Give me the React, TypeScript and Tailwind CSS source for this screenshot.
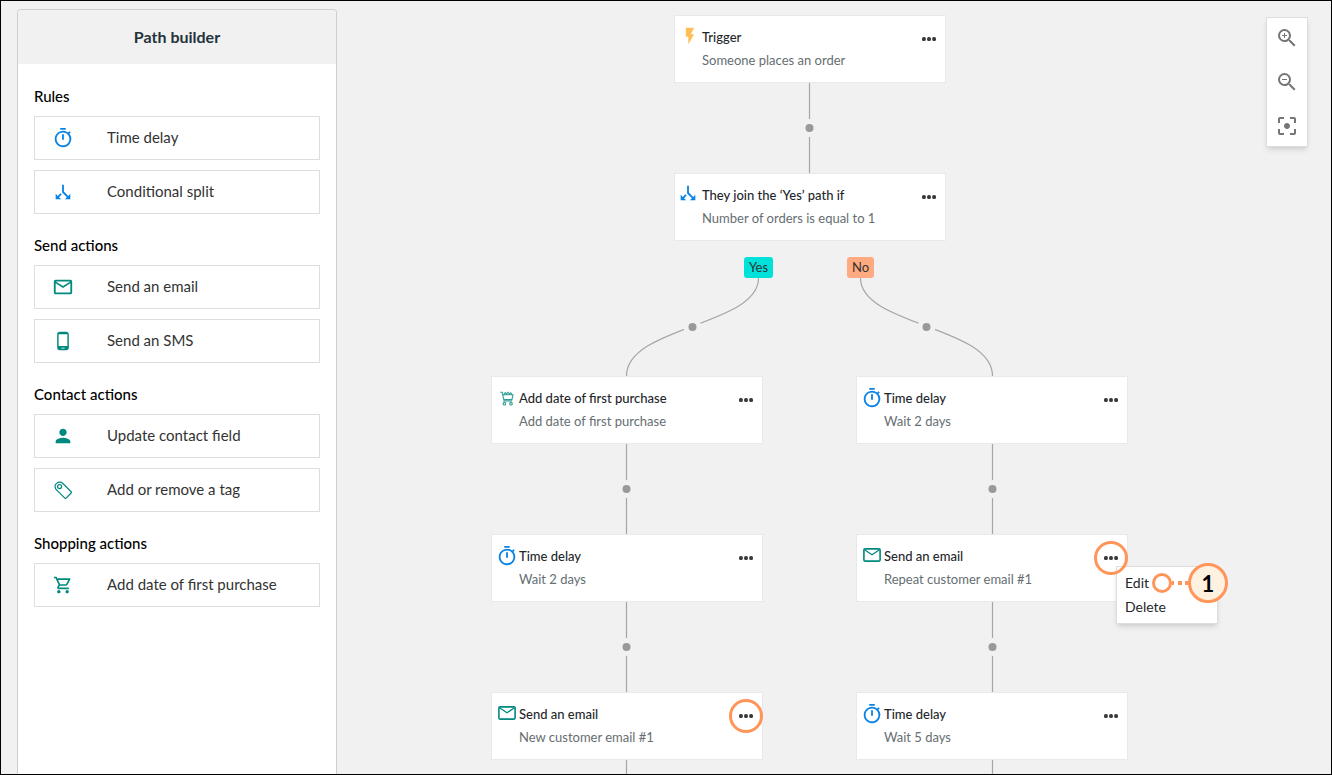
import type { ReactNode } from 'react';
import { clsx } from 'clsx';
import {
    MdCallSplit,
    MdFilterCenterFocus,
    MdFlashOn,
    MdOutlineEmail,
    MdOutlineShoppingCart,
    MdOutlineTimer,
    MdPerson,
    MdPhoneAndroid,
    MdZoomIn,
    MdZoomOut,
} from 'react-icons/md';

function TagIcon() {
    return (
        <svg viewBox="0 0 24 24" className="size-[22px] text-[#00897f]" fill="none" stroke="currentColor" strokeWidth="1.3">
            <path d="M4.2 11.2C2.9 8.6 3.2 6.2 5 4.8c1.9-1.5 4.7-1.6 6.6-.2l9.3 9.3a1 1 0 0 1 0 1.4l-5.5 5.5a1 1 0 0 1-1.4 0z" />
            <circle cx="8.3" cy="8.3" r="2.2" />
        </svg>
    );
}

function CartFullIcon() {
    return (
        <svg viewBox="0 0 14 15" className="h-[15px] w-[14px] text-[#2f9e95]" fill="none" stroke="currentColor" strokeWidth="1.1">
            <path d="M.3 1.3h1.9L4.1 10h8M3 3.8h10L11.9 8.6H3.8M3.8 3.5L5.2 1.6l1.3 1.3L8 1.3l1.5 1.5 1.2-1L12 3.5" />
            <circle cx="4.4" cy="12.7" r="1.3" />
            <circle cx="11" cy="12.7" r="1.3" />
        </svg>
    );
}

function MailIcon() {
    return (
        <svg viewBox="0 0 18 14" className="mb-0.5 h-[14px] w-[18px] text-[#00897f]" fill="none" stroke="currentColor">
            <rect x=".9" y=".9" width="16.2" height="12.2" rx="1" strokeWidth="1.6" />
            <path d="M1.5 1.8L9 6.8l7.5-5" strokeWidth="1.3" />
        </svg>
    );
}

const timer = <MdOutlineTimer className="size-[22px] text-[#0a84e4]" />;
const split = <MdCallSplit className="size-[22px] rotate-180 text-[#0a84e4]" />;

const GROUPS: { title: string; items: { label: string; icon: ReactNode }[] }[] = [
    {
        title: 'Rules',
        items: [
            { label: 'Time delay', icon: timer },
            { label: 'Conditional split', icon: split },
        ],
    },
    {
        title: 'Send actions',
        items: [
            { label: 'Send an email', icon: <MdOutlineEmail className="size-[22px] text-[#00897f]" /> },
            { label: 'Send an SMS', icon: <MdPhoneAndroid className="size-[22px] p-px text-[#00897f]" /> },
        ],
    },
    {
        title: 'Contact actions',
        items: [
            { label: 'Update contact field', icon: <MdPerson className="size-[22px] text-[#00897f]" /> },
            { label: 'Add or remove a tag', icon: <TagIcon /> },
        ],
    },
    {
        title: 'Shopping actions',
        items: [
            { label: 'Add date of first purchase', icon: <MdOutlineShoppingCart className="size-[22px] p-px text-[#00897f]" /> },
        ],
    },
];

type Step = { id: string; place: string; title: string; detail: string; icon: ReactNode };

// Positions are relative to the canvas
const STEPS: Step[] = [
    {
        id: 'trigger',
        place: 'left-[337px] top-[14px]',
        title: 'Trigger',
        detail: 'Someone places an order',
        icon: <MdFlashOn className="mb-0.5 size-5 text-[#ffbe55]" />,
    },
    {
        id: 'split',
        place: 'left-[337px] top-[172px]',
        title: 'They join the ‘Yes’ path if',
        detail: 'Number of orders is equal to 1',
        icon: <MdCallSplit className="mb-1 mr-1 size-[22px] shrink-0 rotate-180 text-[#0a84e4]" />,
    },
    {
        id: 'yes-1',
        place: 'left-[154px] top-[375px]',
        title: 'Add date of first purchase',
        detail: 'Add date of first purchase',
        icon: <CartFullIcon />,
    },
    { id: 'yes-2', place: 'left-[154px] top-[533px]', title: 'Time delay', detail: 'Wait 2 days', icon: timer },
    { id: 'yes-3', place: 'left-[154px] top-[691px]', title: 'Send an email', detail: 'New customer email #1', icon: <MailIcon /> },
    { id: 'no-1', place: 'left-[519px] top-[375px]', title: 'Time delay', detail: 'Wait 2 days', icon: timer },
    { id: 'no-2', place: 'left-[519px] top-[533px]', title: 'Send an email', detail: 'Repeat customer email #1', icon: <MailIcon /> },
    { id: 'no-3', place: 'left-[519px] top-[691px]', title: 'Time delay', detail: 'Wait 5 days', icon: timer },
];

const LINKS = [
    'M472.5 82V172',
    'M421.5 277C421.5 325 289.5 325 289.5 375',
    'M523.5 277C523.5 325 655.5 325 655.5 375',
    'M289.5 443V533',
    'M289.5 601V691',
    'M289.5 759V849',
    'M655.5 443V533',
    'M655.5 601V691',
    'M655.5 759V849',
];

const JOINTS = [
    [472.5, 127],
    [355.5, 326],
    [589.5, 326],
    [289.5, 488],
    [289.5, 646],
    [655.5, 488],
    [655.5, 646],
];

function Connectors() {
    return (
        <svg className="absolute left-0 top-0 h-full w-full" aria-hidden="true">
            {LINKS.map((d) => (
                <path key={d} d={d} fill="none" stroke="#a6a6a6" strokeWidth="1.2" />
            ))}
            {JOINTS.map(([x, y]) => (
                <g key={`${x}-${y}`}>
                    <circle cx={x} cy={y} r="9" fill="#f1f1f1" />
                    <circle cx={x} cy={y} r="4" fill="#999999" />
                </g>
            ))}
        </svg>
    );
}

function StepCard({ step }: { step: Step }) {
    return (
        <article className={clsx('absolute flex h-[68px] w-[272px] gap-px border border-[#e7e9eb] bg-white pl-1 pt-[10px]', step.place)}>
            <span className="flex h-[22px] w-[22px] shrink-0 items-center justify-center">{step.icon}</span>
            <div className="whitespace-nowrap text-[13px] leading-[23px]">
                <h3 className="font-medium text-[#1f272b]">{step.title}</h3>
                <p className="text-[#666e72]">{step.detail}</p>
            </div>
            <button type="button" aria-label={`Options for ${step.title}`} className="ml-auto mr-[9px] flex h-[26px] items-center">
                <svg viewBox="0 0 14 4" className="h-1 w-[14px]" fill="#3a3a3a">
                    <rect width="3.8" height="4" rx="1.5" />
                    <rect x="5.1" width="3.8" height="4" rx="1.5" />
                    <rect x="10.2" width="3.8" height="4" rx="1.5" />
                </svg>
            </button>
        </article>
    );
}

function Sidebar() {
    return (
        <aside className="ml-4 mt-2 w-80 shrink-0 rounded-t border border-b-0 border-[#cfcfcf] bg-white">
            <h1 className="flex h-[54px] items-center justify-center rounded-t bg-[#f1f1f1] text-[16px] font-bold text-[#24333b]">
                Path builder
            </h1>
            <div className="flex flex-col gap-[21px] px-4 pt-[22px]">
                {GROUPS.map((group) => (
                    <section key={group.title}>
                        <h2 className="mb-[10px] text-[15px] font-medium leading-5 text-black">{group.title}</h2>
                        <div className="flex flex-col gap-[10px]">
                            {group.items.map((item) => (
                                <button
                                    key={item.label}
                                    type="button"
                                    className="flex h-11 w-full items-center gap-[33px] border border-[#dcdedf] bg-white pl-[17px] text-left text-[15px] text-[#333333]"
                                >
                                    {item.icon}
                                    <span className="pb-0.5">{item.label}</span>
                                </button>
                            ))}
                        </div>
                    </section>
                ))}
            </div>
        </aside>
    );
}

function ZoomControls() {
    return (
        <div className="absolute right-[23px] top-4 flex w-[42px] flex-col items-center gap-5 border border-[#dddddd] bg-white py-2 text-[#757575] shadow-md">
            <button type="button" aria-label="Zoom in">
                <MdZoomIn className="size-6" />
            </button>
            <button type="button" aria-label="Zoom out">
                <MdZoomOut className="size-6" />
            </button>
            <button type="button" aria-label="Fit to screen">
                <MdFilterCenterFocus className="size-6" />
            </button>
        </div>
    );
}

function StepMenu() {
    return (
        <div
            role="menu"
            className="absolute left-[779px] top-[565px] flex w-[102px] flex-col border border-[#dddddd] bg-white py-1 pl-2 text-[14px] leading-6 text-[#1f272b] shadow-md"
        >
            <button type="button" role="menuitem" className="text-left">
                Edit
            </button>
            <button type="button" role="menuitem" className="text-left">
                Delete
            </button>
        </div>
    );
}

function Callouts() {
    return (
        <>
            <span className="absolute left-[757px] top-[540px] size-[34px] rounded-full border-3 border-[#ff9559]" />
            <span className="absolute left-[392px] top-[698px] size-[34px] rounded-full border-3 border-[#ff9559]" />
            <div className="absolute left-[815px] top-[562px] flex items-center">
                <span className="size-5 rounded-full border-3 border-[#ff9559] bg-white" />
                <svg viewBox="0 0 16 4" className="h-1 w-4" fill="#ff9559">
                    <path d="M0 0h2v4H0zM6 0h4v4H6zM13 0h3v4h-3z" />
                </svg>
                <span className="flex size-10 items-center justify-center rounded-full border-3 border-[#ff9559] bg-[#fff1df] text-[22px] font-bold text-black">
                    1
                </span>
            </div>
        </>
    );
}

export default function App() {
    return (
        <div className="flex h-screen overflow-hidden border border-black bg-[#f1f1f1] font-['Lato',sans-serif]">
            <Sidebar />
            <main className="relative flex-1 overflow-hidden">
                <Connectors />
                {STEPS.map((step) => (
                    <StepCard key={step.id} step={step} />
                ))}
                <span className="absolute left-[407px] top-[256px] flex h-[21px] w-[29px] items-center justify-center rounded-[3px] bg-[#00e1da] text-[13px] text-[#333333]">
                    Yes
                </span>
                <span className="absolute left-[510px] top-[256px] flex h-[21px] w-[27px] items-center justify-center rounded-[3px] bg-[#ffaa80] text-[13px] text-[#333333]">
                    No
                </span>
                <StepMenu />
                <Callouts />
                <ZoomControls />
            </main>
        </div>
    );
}
